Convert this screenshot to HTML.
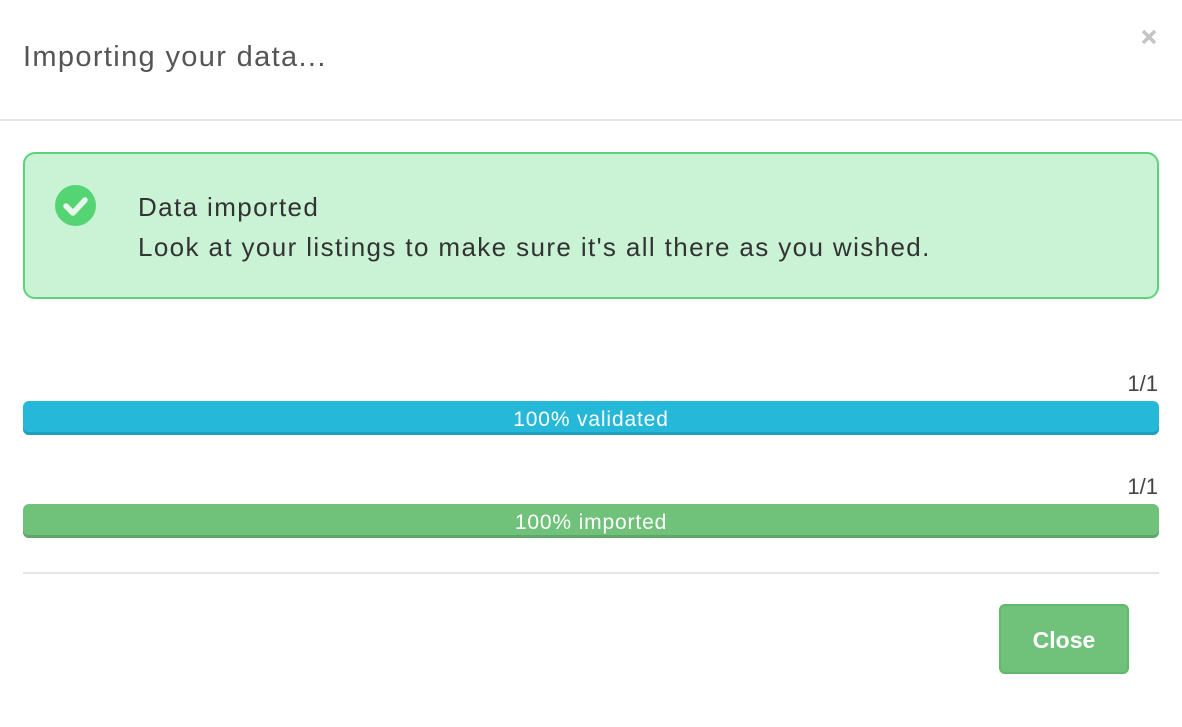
<!DOCTYPE html>
<html><head><style>
body{margin:0;width:1182px;height:727px;background:#fff;font-family:"Liberation Sans",sans-serif;position:relative;overflow:hidden;color:#333}
.a{position:absolute}
</style></head><body>
<div class="a" style="left:23px;top:41px;font-size:29px;color:#555;letter-spacing:1.35px">Importing your data...</div>
<svg class="a" style="left:1141px;top:29px" width="16" height="16"><path d="M2 2L14 14M14 2L2 14" stroke="#c4c4c4" stroke-width="3.5"/></svg>
<div class="a" style="left:0;top:119px;width:1182px;height:2px;background:#e5e5e5"></div>
<div class="a" style="left:23px;top:152px;width:1132px;height:143px;border:2px solid #5cd37a;border-radius:12px;background:#caf2d5"></div>
<svg class="a" style="left:55px;top:185px" width="41" height="41"><circle cx="20.5" cy="20.5" r="20.5" fill="#55d474"/><path d="M11 21l7 7 12-13" stroke="#e8f8ec" stroke-width="5.5" fill="none" stroke-linecap="round" stroke-linejoin="round"/></svg>
<div class="a" style="left:138px;top:187px;font-size:26px;line-height:40px;color:#333;letter-spacing:1.38px;white-space:nowrap">Data imported<br>Look at your listings to make sure it's all there as you wished.</div>
<div class="a" style="right:24px;top:371px;font-size:22px;color:#444">1/1</div>
<div class="a" style="left:23px;top:401px;width:1136px;height:34px;border-radius:6px;background:#25b8d9;box-shadow:inset 0 -3px 0 #1e9fbc;color:#fff;font-size:21px;line-height:37px;text-align:center;letter-spacing:0.85px">100% validated</div>
<div class="a" style="right:24px;top:474px;font-size:22px;color:#444">1/1</div>
<div class="a" style="left:23px;top:504px;width:1136px;height:34px;border-radius:6px;background:#70c27a;box-shadow:inset 0 -3px 0 #5ea768;color:#fff;font-size:21px;line-height:37px;text-align:center;letter-spacing:0.85px">100% imported</div>
<div class="a" style="left:23px;top:572px;width:1136px;height:2px;background:#e5e5e5"></div>
<div class="a" style="left:999px;top:604px;width:126px;height:66px;border:2px solid #62b96d;border-radius:6px;background:#70c27a;color:#fff;font-weight:bold;font-size:23px;line-height:68px;text-align:center">Close</div>
</body></html>
